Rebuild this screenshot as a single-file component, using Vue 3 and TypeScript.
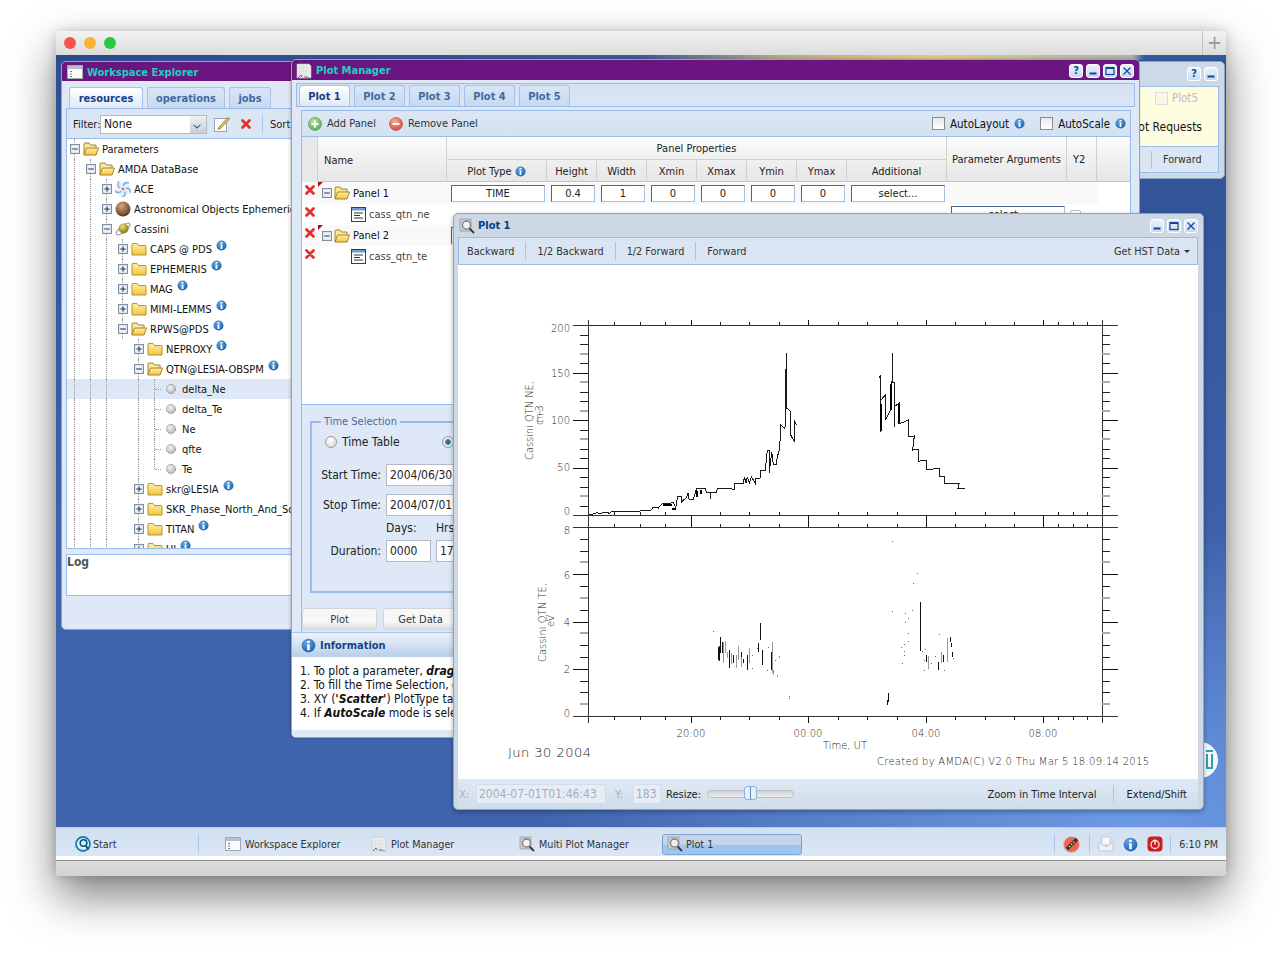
<template>
  <div class="page">
    <svg class="defs" width="0" height="0">
      <defs>
        <linearGradient id="gFolder" x1="0" y1="0" x2="0" y2="1"><stop offset="0" stop-color="#fff0a8" /><stop offset="1" stop-color="#f5c23c" /></linearGradient>
        <radialGradient id="gInfo" cx=".4" cy=".3" r=".8"><stop offset="0" stop-color="#6aa6e2" /><stop offset="1" stop-color="#0e5aa8" /></radialGradient>
        <radialGradient id="gAstro" cx=".4" cy=".3" r=".8"><stop offset="0" stop-color="#d9a77c" /><stop offset="1" stop-color="#4a2a18" /></radialGradient>
        <radialGradient id="gLeaf" cx=".4" cy=".35" r=".7"><stop offset="0" stop-color="#f4f4f4" /><stop offset="1" stop-color="#b4b4b4" /></radialGradient>
        <radialGradient id="gGreen" cx=".4" cy=".3" r=".8"><stop offset="0" stop-color="#b5e5a2" /><stop offset="1" stop-color="#4fa84a" /></radialGradient>
        <radialGradient id="gRed" cx=".4" cy=".3" r=".8"><stop offset="0" stop-color="#f9aa9c" /><stop offset="1" stop-color="#d8422f" /></radialGradient>
        <radialGradient id="gSaturn" cx=".4" cy=".3" r=".8"><stop offset="0" stop-color="#f1df62" /><stop offset="1" stop-color="#6f6420" /></radialGradient>
      </defs>
      <symbol id="folder" viewBox="0 0 16 16"><path d="M1 14V3.500q0-1 1-1h4l1.500 2H14q1 0 1 1V14z" fill="url(#gFolder)" stroke="#b3942f" /></symbol>
      <symbol id="folderOpen" viewBox="0 0 16 16"><path d="M1 14V3q0-1 1-1h4l1.500 2H13v3" fill="#f7e7a0" stroke="#a38626" /><path d="M1 14l2.500-7h12L13 14z" fill="url(#gFolder)" stroke="#a38626" /></symbol>
      <symbol id="plusBox" viewBox="0 0 9 9"><rect x=".5" y=".5" width="8" height="8" fill="#eef2f8" stroke="#7f8fa5" /><path d="M2 4.500h5M4.500 2v5" stroke="#24384f" /></symbol>
      <symbol id="minusBox" viewBox="0 0 9 9"><rect x=".5" y=".5" width="8" height="8" fill="#eef2f8" stroke="#7f8fa5" /><path d="M2 4.500h5" stroke="#24384f" /></symbol>
      <symbol id="info" viewBox="0 0 12 12"><circle cx="6" cy="6" r="5.500" fill="url(#gInfo)" /><rect x="5" y="2.200" width="2" height="1.800" fill="#fff" /><rect x="5" y="5" width="2" height="4.800" fill="#fff" /></symbol>
      <symbol id="redX" viewBox="0 0 12 12"><path d="M2.500 2.500l7 7M9.500 2.500l-7 7" stroke="#e2302b" stroke-width="2.800" stroke-linecap="round" /></symbol>
      <symbol id="leaf" viewBox="0 0 12 12"><circle cx="6" cy="6" r="4.500" fill="url(#gLeaf)" stroke="#9a9a9a" stroke-dasharray="2 .6" /></symbol>
      <symbol id="ace" viewBox="0 0 16 16"><circle cx="8" cy="8" r="7.500" fill="#e6f0fa" /><g fill="none" stroke="#7eb0e4" stroke-width="1.500"><path d="M8 5c1-3 3-4 6-3" /><path d="M8 5c1-3 3-4 6-3" transform="rotate(72 8 8)" /><path d="M8 5c1-3 3-4 6-3" transform="rotate(144 8 8)" /><path d="M8 5c1-3 3-4 6-3" transform="rotate(216 8 8)" /><path d="M8 5c1-3 3-4 6-3" transform="rotate(288 8 8)" /></g><circle cx="8" cy="8" r="1.300" fill="#e0663a" /></symbol>
      <symbol id="astro" viewBox="0 0 16 16"><circle cx="8" cy="8" r="7.500" fill="url(#gAstro)" /></symbol>
      <symbol id="cassini" viewBox="0 0 16 16"><ellipse cx="8" cy="8" rx="8.500" ry="3" transform="rotate(-40 8 8)" fill="none" stroke="#a5a59c" stroke-width="1.200" /><circle cx="8.500" cy="7.500" r="5" fill="url(#gSaturn)" /></symbol>
      <symbol id="param" viewBox="0 0 15 15"><rect x=".5" y=".5" width="14" height="14" fill="#fff" stroke="#23406b" /><rect x="1" y="1" width="13" height="2.500" fill="#6f9bd0" /><path d="M3 6h9M3 8.500h6M3 11h9" stroke="#333" /></symbol>
      <symbol id="pencil" viewBox="0 0 16 16"><rect x=".5" y="2.500" width="12" height="13" fill="#fdfdfd" stroke="#9aa4b0" /><path d="M5 11L14 1.500l1.500 1.500-9 9.500-2.500.8z" fill="#eec35c" stroke="#8c6a26" stroke-width=".8" /></symbol>
      <symbol id="appWin" viewBox="0 0 16 14"><rect x=".5" y=".5" width="15" height="13" fill="#fbfbfb" stroke="#a4a9b0" /><rect x="1" y="1" width="14" height="3" fill="#b5c0cc" /><path d="M3 6.500h2M3 9h2M3 11.500h2" stroke="#5a84b6" /></symbol>
      <symbol id="chartDoc" viewBox="0 0 16 16"><path d="M1 1h12l2 2v12H1z" fill="#efefef" stroke="#c4c4c4" stroke-width=".6" /><path d="M4 1v14M7 1v14M10 1v14M1 5h14M1 8h14M1 11h14" stroke="#d4d4d4" stroke-width=".6" /><path d="M2 15l3-3 1 2M9 13v2M11 13v2M13 14v1" stroke="#666" stroke-width="1" fill="none" /></symbol>
      <symbol id="magnify" viewBox="0 0 16 16"><rect x="1" y="1" width="11" height="12" fill="#c9cace" stroke="#8a8e96" stroke-width=".6" /><circle cx="7.500" cy="7" r="4" fill="#f7eeee" stroke="#7d7f86" stroke-width="1.300" /><path d="M10.500 10.500l4.500 4.500" stroke="#33373e" stroke-width="1.800" /></symbol>
      <symbol id="addBtn" viewBox="0 0 14 14"><circle cx="7" cy="7" r="6.500" fill="url(#gGreen)" stroke="#5b9a50" stroke-width=".7" /><path d="M3.500 7h7M7 3.500v7" stroke="#fff" stroke-width="2" /></symbol>
      <symbol id="removeBtn" viewBox="0 0 14 14"><circle cx="7" cy="7" r="6.500" fill="url(#gRed)" stroke="#c2513f" stroke-width=".7" /><path d="M3.500 7h7" stroke="#fff" stroke-width="2" /></symbol>
      <symbol id="wMin" viewBox="0 0 10 10"><path d="M1.500 7.500h7" stroke="#14459a" stroke-width="1.800" /></symbol>
      <symbol id="wMax" viewBox="0 0 10 10"><rect x="1" y="1.500" width="8" height="7" fill="none" stroke="#14459a" stroke-width="1.200" /><path d="M1 2.300h8" stroke="#14459a" stroke-width="1.400" /></symbol>
      <symbol id="wClose" viewBox="0 0 10 10"><path d="M1.500 1.500l7 7M8.500 1.500l-7 7" stroke="#14459a" stroke-width="1.200" /></symbol>
      <symbol id="startIcon" viewBox="0 0 16 16"><circle cx="8" cy="8" r="7" fill="#d8f0f8" stroke="#1a7fb5" stroke-width="1.800" /><circle cx="8.500" cy="7" r="3.300" fill="none" stroke="#104f7a" stroke-width="1.600" /><path d="M10.500 9.500l3 4" stroke="#104f7a" stroke-width="1.800" /></symbol>
      <symbol id="plug" viewBox="0 0 18 18"><circle cx="8.500" cy="9.500" r="8" fill="#ef6350" stroke="#c9cbcf" /><path d="M4 14L14 4" stroke="#35363a" stroke-width="3.500" /><path d="M6 12l6-6" stroke="#e8d37a" stroke-width="1.400" stroke-dasharray="1.500 1.500" /></symbol>
      <symbol id="mail" viewBox="0 0 16 16"><path d="M4 1h8v8H4z" fill="#fafafa" stroke="#b4bcc6" stroke-width=".7" /><path d="M1 6l7 5 7-5v9H1z" fill="#eef2f7" stroke="#b4bcc6" stroke-width=".7" /></symbol>
      <symbol id="power" viewBox="0 0 16 16"><rect x=".5" y=".5" width="15" height="15" rx="4" fill="#c8201c" /><circle cx="8" cy="8.500" r="4" fill="none" stroke="#fbe8e4" stroke-width="1.300" /><path d="M8 3.500v5" stroke="#fbe8e4" stroke-width="1.500" /></symbol>
      <symbol id="trash" viewBox="0 0 36 36"><circle cx="18" cy="18" r="18" fill="#f4f7fb" /><path d="M24 9h7M25 12v14h5V12" fill="none" stroke="#2f9fb3" stroke-width="2" /></symbol>
    </svg>

    <div class="mac-window">
      <div class="mac-title">
        <span class="light red"></span>
        <span class="light amber"></span>
        <span class="light green"></span>
        <span class="mac-plus">+</span>
      </div>

      <div class="desktop">
        <svg class="trash-shortcut"><use href="#trash" /></svg>

        <!-- Workspace Explorer -->
        <section class="win explorer">
          <header class="win-title purple">
            <svg class="ic16"><use href="#appWin" /></svg>
            <span class="win-name">Workspace Explorer</span>
          </header>
          <div class="explorer-body">
            <div class="tab-strip">
              <div v-for="(t, i) in explorerTabs" :key="t" class="tab" :class="{ active: i == 0 }">{{ t }}</div>
            </div>
            <div class="explorer-tools">
              <span class="filter-label">Filter:</span>
              <div class="combo"><span>None</span><i class="combo-arrow"></i></div>
              <svg class="ic16 tool-gap"><use href="#pencil" /></svg>
              <svg class="ic12 tool-gap2"><use href="#redX" /></svg>
              <i class="tool-sep"></i>
              <span class="sort-label">Sort</span>
            </div>
            <div class="tree">
              <div v-for="row in treeRows" :key="row.label" class="tree-row" :class="{ selected: row.selected }">
                <span v-for="c in row.level" :key="c" class="cell" :class="{ line: hasGuide(row.level, c - 1) }"></span>
                <span class="cell" :class="row.expand ? 'line' : 'elbow' + (row.label == 'Te' ? ' last' : '')">
                  <svg v-if="row.expand" class="box"><use :href="row.expand == 'plus' ? '#plusBox' : '#minusBox'" /></svg>
                </span>
                <svg :class="row.icon == 'leaf' ? 'ic12 leaf-ic' : 'ic16'"><use :href="'#' + row.icon" /></svg>
                <span class="tree-label">{{ row.label }}</span>
                <svg v-if="row.info" class="ic11 raised"><use href="#info" /></svg>
              </div>
            </div>
            <div class="log"><b>Log</b></div>
          </div>
        </section>

        <!-- Multi Plot Manager, mostly behind the others -->
        <section class="win multi">
          <header class="multi-title">
            <span class="win-btn">?</span>
            <span class="win-btn"><svg><use href="#wMin" /></svg></span>
          </header>
          <div class="multi-yellow">
            <div class="multi-plot"><i class="check disabled"></i><span>Plot5</span></div>
            <div class="multi-req">Plot Requests</div>
          </div>
          <div class="multi-tools"><i class="tool-sep"></i><span>Forward</span></div>
        </section>

        <!-- Plot Manager -->
        <section class="win manager">
          <header class="win-title purple manager-title">
            <svg class="ic16"><use href="#chartDoc" /></svg>
            <span class="win-name">Plot Manager</span>
            <div class="win-btns">
              <span class="win-btn">?</span>
              <span class="win-btn"><svg><use href="#wMin" /></svg></span>
              <span class="win-btn"><svg><use href="#wMax" /></svg></span>
              <span class="win-btn"><svg><use href="#wClose" /></svg></span>
            </div>
          </header>
          <div class="manager-body">
            <div class="tab-strip plot-tabs">
              <div v-for="(t, i) in plotTabs" :key="t" class="tab" :class="{ active: i == 0 }">{{ t }}</div>
            </div>
            <div class="manager-inner">
              <div class="panel-tools">
                <svg class="ic14"><use href="#addBtn" /></svg><span>Add Panel</span>
                <svg class="ic14 remove-ic"><use href="#removeBtn" /></svg><span>Remove Panel</span>
                <span class="spacer"></span>
                <i class="check"></i><span class="auto-label">AutoLayout</span><svg class="ic11"><use href="#info" /></svg>
                <i class="check auto2"></i><span class="auto-label">AutoScale</span><svg class="ic11"><use href="#info" /></svg>
              </div>
              <div class="grid-head">
                <div class="hcell h-del"></div>
                <div class="hcell h-name">Name</div>
                <div class="hcell h-props">Panel Properties</div>
                <div class="hcell h-sub" v-for="h in subHeads" :key="h">
                  {{ h }}<svg v-if="h == 'Plot Type'" class="ic11 head-info"><use href="#info" /></svg>
                </div>
                <div class="hcell h-args">Parameter Arguments</div>
                <div class="hcell h-y2">Y2</div>
                <div class="hcell h-end"></div>
              </div>
              <div class="grid-rows">
                <div v-for="p in panelRows" :key="p.name" class="grid-row" :class="{ shaded: p.panel }">
                  <div class="del-cell"><svg class="ic12"><use href="#redX" /></svg></div>
                  <div v-if="p.panel" class="name-cell panel-name">
                    <i class="dirty"></i>
                    <svg class="box"><use href="#minusBox" /></svg>
                    <svg class="ic16"><use href="#folderOpen" /></svg>
                    <span>{{ p.name }}</span>
                  </div>
                  <div v-else class="name-cell param-name">
                    <svg class="ic15"><use href="#param" /></svg>
                    <span>{{ p.name }}</span>
                  </div>
                  <template v-if="p.panel">
                    <div v-for="(v, i) in panelValues(p.name)" :key="i" class="val-cell"><input class="val" :value="v" readonly /></div>
                  </template>
                  <template v-else>
                    <div class="blank-props"></div>
                    <div class="val-cell"><input class="val" value="select..." readonly /></div>
                    <div class="val-cell y2"><i class="check small"></i></div>
                  </template>
                </div>
              </div>
              <div class="time-wrap">
                <fieldset class="time-set">
                  <legend>Time Selection</legend>
                  <div class="radio-line">
                    <i class="radio"></i><span class="radio-text">Time Table</span>
                    <i class="radio on"></i><span>Interval</span>
                  </div>
                  <div class="time-line"><label>Start Time:</label><input class="time-in" value="2004/06/30 17:00:00" readonly /></div>
                  <div class="time-line"><label>Stop Time:</label><input class="time-in" value="2004/07/01 11:00:00" readonly /></div>
                  <div class="time-line units"><label></label><span class="unit">Days:</span><span>Hrs:</span></div>
                  <div class="time-line dur"><label>Duration:</label><input class="dur-in" value="0000" readonly /><input class="dur-in" value="17" readonly /></div>
                </fieldset>
                <div class="form-btns">
                  <div class="form-btn">Plot</div>
                  <div class="form-btn">Get Data</div>
                </div>
              </div>
            </div>
            <div class="info-head"><svg class="ic15b"><use href="#info" /></svg><b>Information</b></div>
            <div class="info-text">
              <div>1. To plot a parameter, <b><i>drag</i></b> it to a panel</div>
              <div>2. To fill the Time Selection, drag a Time Table</div>
              <div>3. XY (<b><i>'Scatter'</i></b>) PlotType takes two parameters</div>
              <div>4. If <b><i>AutoScale</i></b> mode is selected</div>
            </div>
          </div>
        </section>

        <!-- Plot 1 -->
        <section class="win plot1">
          <header class="plot-title">
            <svg class="ic16"><use href="#magnify" /></svg>
            <span class="plot-name">Plot 1</span>
            <div class="win-btns">
              <span class="win-btn"><svg><use href="#wMin" /></svg></span>
              <span class="win-btn"><svg><use href="#wMax" /></svg></span>
              <span class="win-btn"><svg><use href="#wClose" /></svg></span>
            </div>
          </header>
          <div class="plot-tools">
            <template v-for="(b, i) in navButtons" :key="b">
              <span>{{ b }}</span><i v-if="i < 3" class="tool-sep"></i>
            </template>
            <span class="spacer"></span>
            <span>Get HST Data</span><i class="caret"></i>
          </div>
          <svg class="plot-svg" viewBox="458 265 740 514" shape-rendering="crispEdges">
            <path :d="axisPath" fill="none" stroke="#333" stroke-width="1" />
            <path :d="majorTicks" fill="none" stroke="#111" stroke-width="1" />
            <path :d="minorTicks" fill="none" stroke="#222" stroke-width="1" />
            <path :d="grayTicks" fill="none" stroke="#aaa" stroke-width="2" />
            <path :d="nePathLeft" fill="none" stroke="#1a1a1a" stroke-width="1" />
            <path :d="nePathRight" fill="none" stroke="#1a1a1a" stroke-width="1" />
            <path :d="neThick" fill="none" stroke="#000" stroke-width="2" />
            <path :d="teBlack" fill="none" stroke="#111" stroke-width="1" />
            <path :d="teGray" fill="none" stroke="#999" stroke-width="1" />
            <path :d="teDots" fill="none" stroke="#666" stroke-width="1" />
            <g class="plot-text" shape-rendering="auto">
              <text v-for="l in yLabels" :key="l.t + l.y" :x="570" :y="l.y" text-anchor="end">{{ l.t }}</text>
              <text v-for="l in xLabels" :key="l.t" :x="l.x" y="737" text-anchor="middle">{{ l.t }}</text>
              <text transform="translate(533,460) rotate(-90)" textLength="79">Cassini QTN NE,</text>
              <text class="small" transform="translate(543,425) rotate(-90)" textLength="20">cm−3</text>
              <text transform="translate(546,662) rotate(-90)" textLength="79">Cassini QTN TE,</text>
              <text class="small" transform="translate(554,627) rotate(-90)">eV</text>
              <text x="823" y="749" textLength="44">Time, UT</text>
              <text class="date" x="508" y="757" textLength="83">Jun  30  2004</text>
              <text x="877" y="765" textLength="272">Created by AMDA(C) V2.0 Thu Mar  5 18:09:14 2015</text>
            </g>
          </svg>
          <div class="plot-foot">
            <span class="off x-label">X:</span><input class="off-in x-in" value="2004-07-01T01:46:43" readonly />
            <span class="off y-label">Y:</span><input class="off-in y-in" value="183" readonly />
            <span class="resize-label">Resize:</span>
            <div class="slider"><i class="thumb"></i></div>
            <span class="spacer"></span>
            <span>Zoom in Time Interval</span><i class="tool-sep"></i><span class="extend">Extend/Shift</span>
          </div>
        </section>
      </div>

      <footer class="taskbar">
        <div class="task-item start-item"><svg class="ic16"><use href="#startIcon" /></svg><span>Start</span></div>
        <i class="tool-sep start-sep"></i>
        <div class="task-item item-ws"><svg class="ic16"><use href="#appWin" /></svg><span>Workspace Explorer</span></div>
        <div class="task-item item-pm"><svg class="ic16"><use href="#chartDoc" /></svg><span>Plot Manager</span></div>
        <div class="task-item item-mp"><svg class="ic16"><use href="#magnify" /></svg><span>Multi Plot Manager</span></div>
        <div class="task-active"><svg class="ic16"><use href="#magnify" /></svg><span>Plot 1</span></div>
        <span class="spacer"></span>
        <i class="tool-sep"></i>
        <svg class="ic18 tray1"><use href="#plug" /></svg>
        <i class="tool-sep tray-sep"></i>
        <svg class="ic16 tray2"><use href="#mail" /></svg>
        <svg class="ic15 tray3"><use href="#info" /></svg>
        <svg class="ic16 tray4"><use href="#power" /></svg>
        <i class="tool-sep tray-sep2"></i>
        <span class="clock">6:10 PM</span>
      </footer>
      <div class="white-strip"></div>
      <div class="mac-status"></div>
    </div>
  </div>
</template>

<script setup lang="ts">
interface TreeRow {
  label: string
  level: number
  icon: string
  expand?: 'plus' | 'minus'
  info?: boolean
  selected?: boolean
}

interface PanelRow {
  name: string
  panel: boolean
}

type Pt = [number, number]
// x, y1, y2
type Seg = [number, number, number]

const explorerTabs = ['resources', 'operations', 'jobs']
const plotTabs = ['Plot 1', 'Plot 2', 'Plot 3', 'Plot 4', 'Plot 5']
const subHeads = ['Plot Type', 'Height', 'Width', 'Xmin', 'Xmax', 'Ymin', 'Ymax', 'Additional']
const navButtons = ['Backward', '1/2 Backward', '1/2 Forward', 'Forward']

const treeRows: TreeRow[] = [
  { label: 'Parameters', level: 0, icon: 'folderOpen', expand: 'minus' },
  { label: 'AMDA DataBase', level: 1, icon: 'folderOpen', expand: 'minus' },
  { label: 'ACE', level: 2, icon: 'ace', expand: 'plus' },
  { label: 'Astronomical Objects Ephemerides', level: 2, icon: 'astro', expand: 'plus' },
  { label: 'Cassini', level: 2, icon: 'cassini', expand: 'minus' },
  { label: 'CAPS @ PDS', level: 3, icon: 'folder', expand: 'plus', info: true },
  { label: 'EPHEMERIS', level: 3, icon: 'folder', expand: 'plus', info: true },
  { label: 'MAG', level: 3, icon: 'folder', expand: 'plus', info: true },
  { label: 'MIMI-LEMMS', level: 3, icon: 'folder', expand: 'plus', info: true },
  { label: 'RPWS@PDS', level: 3, icon: 'folderOpen', expand: 'minus', info: true },
  { label: 'NEPROXY', level: 4, icon: 'folder', expand: 'plus', info: true },
  { label: 'QTN@LESIA-OBSPM', level: 4, icon: 'folderOpen', expand: 'minus', info: true },
  { label: 'delta_Ne', level: 5, icon: 'leaf', selected: true },
  { label: 'delta_Te', level: 5, icon: 'leaf' },
  { label: 'Ne', level: 5, icon: 'leaf' },
  { label: 'qfte', level: 5, icon: 'leaf' },
  { label: 'Te', level: 5, icon: 'leaf' },
  { label: 'skr@LESIA', level: 4, icon: 'folder', expand: 'plus', info: true },
  { label: 'SKR_Phase_North_And_South', level: 4, icon: 'folder', expand: 'plus' },
  { label: 'TITAN', level: 4, icon: 'folder', expand: 'plus', info: true },
  { label: 'UI', level: 4, icon: 'folder', expand: 'plus', info: true },
]

const panelRows: PanelRow[] = [
  { name: 'Panel 1', panel: true },
  { name: 'cass_qtn_ne', panel: false },
  { name: 'Panel 2', panel: true },
  { name: 'cass_qtn_te', panel: false },
]

function hasGuide(level: number, col: number) {
  if (col == 3) return false
  if (col == 4) return level == 5
  return true
}

function panelValues(name: string) {
  const height = name == 'Panel 1' ? '0.4' : '0.6'
  return ['TIME', height, '1', '0', '0', '0', '0', 'select...']
}

// plot drawing, coordinates are page pixels
const yLabels = [
  { t: '200', y: 332 }, { t: '150', y: 377 }, { t: '100', y: 424 }, { t: '50', y: 471 }, { t: '0', y: 515 },
  { t: '8', y: 534 }, { t: '6', y: 579 }, { t: '4', y: 626 }, { t: '2', y: 673 }, { t: '0', y: 717 },
]
const xLabels = [
  { t: '20:00', x: 691 }, { t: '00:00', x: 808 }, { t: '04:00', x: 926 }, { t: '08:00', x: 1043 },
]

const axisPath = [
  'M573 325H1118', 'M573 515.500H1118', 'M573 527H1118', 'M573 716H1118',
  'M588 320V723', 'M1102 320V723',
].join('')

const xMajor = [691, 808, 926, 1043]
const xMinor = [614, 640, 665, 720, 749, 779, 838, 867, 897, 955, 985, 1014, 1058, 1073, 1087]

let major = ''
let minor = ''
let gray = ''
for (const x of xMajor) {
  major += `M${x} 320V325M${x} 515V527M${x} 716V723`
}
for (const x of xMinor) {
  minor += `M${x} 322V325M${x} 512V515M${x} 524V527M${x} 716V720`
}

// y ticks of the two panels, every third one came out grey in the original gif
function yTicks(top: number, bottom: number, count: number, every: number) {
  const step = (bottom - top) / count
  for (let i = 1; i < count; i++) {
    const y = Math.round(top + i * step)
    if (i % every == 0) {
      major += `M573 ${y}H588M1102 ${y}H1118`
    } else if (i % 3 == 0) {
      gray += `M580 ${y}H588M1102 ${y}H1110`
    } else {
      minor += `M580 ${y}H588M1102 ${y}H1110`
    }
  }
}
yTicks(325, 515.5, 20, 5)
yTicks(527, 716, 16, 4)

const majorTicks = major
const minorTicks = minor
const grayTicks = gray

function polyline(pts: Pt[], ox: number, oy: number) {
  return pts.map((p, i) => `${i ? 'L' : 'M'}${(ox + p[0] / 3).toFixed(1)} ${(oy + p[1] / 3).toFixed(1)}`).join('')
}

function segments(list: Seg[], ox: number, oy: number) {
  return list.map((s) => `M${Math.round(ox + s[0] / 3)} ${Math.round(oy + s[1] / 3)}V${Math.round(oy + s[2] / 3)}`).join('')
}

const neLeft: Pt[] = [
  [237, 612], [250, 612], [260, 608], [272, 612], [280, 606], [300, 610], [305, 604], [320, 606], [330, 604],
  [380, 604], [400, 602], [420, 603], [430, 592], [445, 594], [455, 582], [490, 578], [497, 592], [503, 560],
  [515, 560], [515, 575], [530, 562], [535, 548], [537, 568], [550, 568], [560, 535], [585, 535], [590, 548],
  [600, 548], [600, 568], [602, 548], [620, 548], [622, 535], [660, 535], [672, 540], [674, 520], [700, 520],
  [703, 500], [708, 520], [712, 500], [718, 520], [724, 500], [736, 520], [738, 505], [750, 505], [752, 482],
  [766, 482], [772, 420], [778, 420], [778, 488], [785, 425], [790, 462], [800, 462], [802, 432], [806, 432],
  [810, 395], [812, 345], [825, 355], [826, 295], [829, 130], [831, 295], [843, 305], [842, 375], [853, 395],
  [853, 333], [860, 345],
]
const neRight: Pt[] = [
  [237, 205], [241, 198], [241, 365], [243, 270], [256, 255], [256, 330], [272, 300], [272, 225], [276, 218],
  [277, 130], [277, 218], [284, 218], [284, 352], [285, 288], [297, 280], [297, 342], [325, 330], [327, 380],
  [343, 378], [338, 420], [354, 418], [354, 454], [380, 450], [380, 478], [418, 476], [420, 500], [432, 500],
  [432, 520], [478, 520], [474, 535], [494, 535],
]
const nePathLeft = polyline(neLeft, 510, 310)
const nePathRight = polyline(neRight, 800, 310)
const neThick = 'M881 404V431M891 385V410M899 404V424M663 505H672M697 491V497M701 490V494M672 509H676'

const teLeftBlack: Seg[] = [
  [653, 380, 420], [657, 378, 422], [661, 352, 400], [665, 365, 398], [688, 390, 445], [700, 405, 430],
  [722, 395, 425], [730, 418, 430], [740, 405, 450], [775, 370, 395], [780, 310, 360], [785, 390, 435], [812, 395, 450],
]
const teLeftGray: Seg[] = [
  [669, 365, 430], [675, 363, 400], [681, 395, 415], [693, 400, 432], [707, 405, 443], [714, 378, 420],
  [722, 410, 442], [748, 385, 430], [815, 365, 460], [820, 450, 465], [830, 465, 470], [836, 408, 415],
]
const teRightBlack: Seg[] = [
  [361, 246, 392], [378, 405, 425], [415, 425, 450], [430, 405, 425], [450, 350, 365], [452, 368, 382],
  [457, 395, 410], [264, 520, 545], [260, 540, 555],
]
const teRightGray: Seg[] = [[383, 408, 448], [423, 395, 428], [440, 355, 425]]
const dotsLeft: Pt[] = [
  [640, 333], [757, 405], [770, 385], [805, 380], [825, 420], [755, 445], [800, 450], [868, 527], [868, 533],
]
const dotsRight: Pt[] = [
  [277, 64], [350, 160], [340, 190], [277, 273], [337, 270], [316, 280], [325, 295], [316, 307], [323, 340],
  [325, 362], [312, 372], [302, 381], [312, 392], [312, 405], [307, 430], [416, 341], [375, 387], [367, 394],
  [372, 420], [373, 451], [393, 430], [405, 407], [433, 450], [460, 413],
]
const teBlack = segments(teLeftBlack, 500, 520) + segments(teRightBlack, 800, 520)
const teGray = segments(teLeftGray, 500, 520) + segments(teRightGray, 800, 520)

function dots(list: Pt[], ox: number, oy: number) {
  return list.map((p) => `M${Math.round(ox + p[0] / 3)} ${Math.round(oy + p[1] / 3)}h1`).join('')
}
const teDots = dots(dotsLeft, 500, 520) + dots(dotsRight, 800, 520)
</script>

<style scoped>
.page {
  width: 1282px;
  height: 956px;
  padding: 31px 56px 0;
  box-sizing: border-box;
  overflow: hidden;
  background: #fff;
  font-family: "DejaVu Sans Condensed", "DejaVu Sans", sans-serif;
  font-size: 11px;
  color: #222;
}

.defs {
  position: absolute;
}

.mac-window {
  width: 1170px;
  height: 845px;
  display: flex;
  flex-direction: column;
  border-radius: 5px 5px 4px 4px;
  overflow: hidden;
  box-shadow: 0 20px 45px rgba(0, 0, 0, 0.5), 0 0 12px rgba(0, 0, 0, 0.18);
}

.mac-title {
  height: 24px;
  flex: none;
  display: flex;
  align-items: center;
  gap: 8px;
  padding-left: 8px;
  background: linear-gradient(#f3f3f3, #dcdcdc);
}

.light {
  width: 12px;
  height: 12px;
  border-radius: 50%;
}
.light.red { background: #f8524f; }
.light.amber { background: #fbb33a; }
.light.green { background: #2ec840; }

.mac-plus {
  margin-left: auto;
  width: 23px;
  height: 24px;
  border-left: 1px solid #c4c4c4;
  text-align: center;
  font-size: 20px;
  line-height: 22px;
  color: #999;
}

.desktop {
  flex: none;
  height: 772px;
  position: relative;
  overflow: hidden;
  background:
    linear-gradient(to right, #2a4a8e 0, #3a5a98 50%, #b6a887 62%, #e0ca8a 75%, #a9b2ac 92%, #34589c 93%) top / 100% 5px no-repeat,
    radial-gradient(ellipse 600px 300px at 92% 100%, #6c9ae4 0, rgba(108, 154, 228, 0.55) 50%, rgba(108, 154, 228, 0) 100%),
    linear-gradient(#2f4f93, #4063ad 70%);
}

.trash-shortcut {
  position: absolute;
  left: 1126px;
  top: 687px;
  width: 36px;
  height: 36px;
}

.taskbar {
  flex: none;
  height: 29px;
  display: flex;
  align-items: center;
  padding: 4px 0 0 19px;
  box-sizing: border-box;
  background: linear-gradient(#d2e0f1, #dae6f4);
  border-top: 1px solid #b9cfe8;
  color: #333;
  font-size: 10.7px;
}

.white-strip {
  height: 4px;
  flex: none;
  background: #fff;
  border-bottom: 1px solid #8d8d8d;
  box-sizing: content-box;
}

.mac-status {
  flex: 1;
  background: linear-gradient(#dcdcdc, #d2d2d2);
}

.ic11 { width: 11px; height: 11px; flex: none; }
.ic12 { width: 12px; height: 12px; flex: none; }
.ic14 { width: 14px; height: 14px; flex: none; }
.ic15 { width: 15px; height: 15px; flex: none; }
.ic15b { width: 15px; height: 15px; flex: none; }
.ic16 { width: 16px; height: 16px; flex: none; }
.ic18 { width: 18px; height: 18px; flex: none; }
.box { width: 10px; height: 10px; flex: none; }

.spacer { flex: 1; }

.tool-sep {
  width: 1px;
  height: 18px;
  flex: none;
  background: #a9c6ea;
}

.win {
  position: absolute;
  box-sizing: border-box;
  border-radius: 5px;
  border: 1px solid #8da3bf;
  overflow: hidden;
  background: #dfe8f6;
  display: flex;
  flex-direction: column;
}

.win-title {
  flex: none;
  height: 20px;
  display: flex;
  align-items: center;
  padding: 1px 0 0 4px;
  box-sizing: border-box;
  gap: 4px;
}

.purple {
  background: #6b1680;
  color: #1fd0c2;
  font-weight: bold;
  font-size: 11px;
}

.win-btns {
  margin-left: auto;
  display: flex;
  gap: 3px;
  padding-right: 5px;
}

.win-btn {
  width: 14px;
  height: 14px;
  box-sizing: border-box;
  border: 1px solid #fff;
  border-radius: 3px;
  background: linear-gradient(#eaf2fc, #c8daf2);
  color: #14459a;
  font-weight: bold;
  font-size: 11px;
  line-height: 12px;
  text-align: center;
  display: flex;
  align-items: center;
  justify-content: center;
}

.win-btn svg {
  width: 10px;
  height: 10px;
}

.tab-strip {
  flex: none;
  display: flex;
  align-items: flex-end;
  gap: 4px;
  padding-left: 3px;
  border: 1px solid #99bce8;
  border-bottom: none;
  background: #dae6f5;
}

.tab {
  box-sizing: border-box;
  padding: 0 10px;
  height: 21px;
  line-height: 21px;
  border: 1px solid #a5c3ea;
  border-bottom: none;
  border-radius: 3px 3px 0 0;
  background: linear-gradient(#d9e6f6, #c6d9f0);
  color: #416aa3;
  font-weight: bold;
}

.tab.active {
  color: #15428b;
  background: linear-gradient(#fff, #dfe9f6);
}

/* explorer */
.explorer {
  left: 5px;
  top: 6px;
  width: 260px;
  height: 569px;
}

.explorer .purple {
  padding-left: 5px;
  height: 19px;
}

.explorer-body {
  flex: 1;
  padding: 6px 0 0 4px;
}

.explorer .tab-strip {
  height: 21px;
  border: none;
  background: none;
  border-bottom: 1px solid #99bce8;
}

.explorer .tab {
  padding: 0;
  width: 74px;
  text-align: center;
}
.explorer .tab:nth-child(2) { width: 78px; }
.explorer .tab:nth-child(3) { width: 42px; }

.explorer-tools {
  height: 30px;
  display: flex;
  align-items: center;
  padding: 1px 0 0 6px;
  border-left: 1px solid #99bce8;
  border-bottom: 1px solid #99bce8;
  background: #dbe6f5;
  white-space: nowrap;
  box-sizing: border-box;
}

.filter-label { width: 27px; flex: none; }

.combo {
  width: 107px;
  height: 19px;
  flex: none;
  box-sizing: border-box;
  border: 1px solid #b5b8c8;
  background: #fff;
  padding-left: 3px;
  line-height: 17px;
  font-size: 12px;
  display: flex;
  justify-content: space-between;
}

.combo-arrow {
  width: 16px;
  background: linear-gradient(#eef1f6, #c9ced6);
  position: relative;
}

.combo-arrow::after {
  content: "";
  position: absolute;
  left: 4px;
  top: 6px;
  width: 5px;
  height: 5px;
  border-right: 1.500px solid #24476f;
  border-bottom: 1.500px solid #24476f;
  transform: scale(0.9, 0.8) rotate(45deg);
}

.tool-gap { margin-left: 7px; }
.tool-gap2 { margin: 0 10px 0 10px; }
.sort-label { margin-left: 7px; }

.tree {
  height: 410px;
  overflow: hidden;
  background: #fff;
  border-left: 1px solid #99bce8;
  border-bottom: 1px solid #99bce8;
  box-sizing: border-box;
}

.tree-row {
  height: 20px;
  display: flex;
  align-items: center;
  white-space: nowrap;
  color: #111;
}

.tree-row.selected {
  background: #dfe8f6;
}

.cell {
  width: 16px;
  height: 20px;
  flex: none;
  position: relative;
  display: flex;
  align-items: center;
  justify-content: center;
}

.cell.line::before,
.cell.elbow::before {
  content: "";
  position: absolute;
  left: 7px;
  top: 0;
  bottom: 0;
  border-left: 1px dotted #999;
}

.cell.elbow.last::before {
  bottom: 10px;
}

.cell.elbow::after {
  content: "";
  position: absolute;
  left: 8px;
  top: 10px;
  width: 6px;
  border-top: 1px dotted #999;
}

.cell .box {
  position: relative;
}

.tree-label {
  margin-left: 3px;
}

.leaf-ic {
  margin: 0 2px;
}

.raised {
  margin-left: 4px;
  margin-bottom: 8px;
}

.log {
  margin-top: 5px;
  height: 42px;
  box-sizing: border-box;
  background: #fff;
  border: 1px solid #99bce8;
  border-right: none;
  color: #555;
  font-size: 12px;
}

/* multi plot */
.multi {
  left: 1060px;
  top: 6px;
  width: 109px;
  height: 118px;
  background: #cdd9e6;
  border-radius: 5px;
}

.multi-title {
  height: 24px;
  flex: none;
  display: flex;
  justify-content: flex-end;
  align-items: center;
  gap: 3px;
  padding-right: 6px;
}

.multi-yellow {
  height: 61px;
  flex: none;
  margin-right: 5px;
  border: 1px solid #99bce8;
  box-sizing: border-box;
  background: #fffde0;
  padding-left: 8px;
  white-space: nowrap;
}

.multi-plot {
  display: flex;
  align-items: center;
  justify-content: flex-end;
  gap: 4px;
  padding: 4px 20px 0 0;
  color: #bbb;
  font-size: 11.5px;
}

.multi-req {
  margin-top: 15px;
  text-align: right;
  padding-right: 16px;
  color: #111;
  font-size: 12px;
}

.multi-tools {
  height: 26px;
  margin-right: 5px;
  flex: none;
  display: flex;
  align-items: center;
  gap: 11px;
  padding-left: 33px;
  background: #dbe6f5;
  border: 1px solid #99bce8;
  border-top: none;
  box-sizing: border-box;
  color: #333;
  font-size: 10.7px;
}

/* manager */
.manager {
  left: 235px;
  top: 4px;
  width: 849px;
  height: 679px;
  z-index: 2;
  box-shadow: -1px 0 3px rgba(0, 0, 0, 0.2);
}

.manager-body {
  flex: 1;
  padding: 3px 4px 0;
  display: flex;
  flex-direction: column;
}

.plot-tabs {
  height: 24px;
  padding-left: 2px;
  background: linear-gradient(#d4e1f2, #dae6f5);
  border-bottom: 1px solid #99bce8;
  box-sizing: border-box;
}

.plot-tabs .tab {
  width: 51px;
  padding: 0;
  text-align: center;
  height: 21px;
}

.manager-inner {
  margin: 3px 0 0 5px;
  margin-right: 4px;
  flex: none;
  height: 522px;
  background: #dfe8f6;
  border: 1px solid #99bce8;
  border-top: none;
  border-bottom: none;
  box-sizing: border-box;
  display: flex;
  flex-direction: column;
}

.panel-tools {
  height: 27px;
  flex: none;
  box-sizing: border-box;
  display: flex;
  align-items: center;
  gap: 5px;
  padding: 0 4px 0 6px;
  background: linear-gradient(#dce7f5, #d3e1f1);
  border-top: 1px solid #99bce8;
  border-bottom: 1px solid #99bce8;
  color: #333;
}

.remove-ic {
  margin-left: 8px;
}

.auto-label {
  color: #111;
  font-size: 11.5px;
}

.auto2 {
  margin-left: 10px;
}

.check {
  width: 13px;
  height: 13px;
  box-sizing: border-box;
  border: 1px solid #8c8c8c;
  background: linear-gradient(#e8e8e8, #fff);
  display: block;
  flex: none;
}

.check.disabled {
  border-color: #ddd;
  background: #f8f8e6;
}

.check.small {
  width: 11px;
  height: 11px;
  border-radius: 2px;
  border-color: #bbb;
  background: #fff;
  margin: 1px 0 0 3px;
}

.grid-head {
  flex: none;
  display: grid;
  grid-template-columns: 16px 129px 100px repeat(6, 50px) 100px 120px 30px 31px;
  grid-template-rows: 23px 22px;
  background: linear-gradient(#fbfbfb, #e6e6e6);
  border-bottom: 1px solid #c5c5c5;
  box-sizing: border-box;
  height: 45px;
  color: #222;
}

.hcell {
  display: flex;
  align-items: center;
  justify-content: center;
  border-right: 1px solid #d0d0d0;
  white-space: nowrap;
}

.h-del { grid-row: 1 / 3; grid-column: 1; background: #e8e8e8; }
.h-name { grid-row: 1 / 3; grid-column: 2; justify-content: flex-start; padding: 1px 0 0 6px; }
.h-props { grid-row: 1; grid-column: 3 / 11; border-bottom: 1px solid #d0d0d0; }
.h-args { grid-row: 1 / 3; grid-column: 11; }
.h-y2 { grid-row: 1 / 3; grid-column: 12; justify-content: flex-start; padding-left: 6px; }
.h-end { grid-row: 1 / 3; grid-column: 13; border-right: none; }
.h-sub { grid-row: 2; }
.head-info { margin-left: 3px; }

.grid-rows {
  flex: none;
  height: 223px;
  background: #fff;
  border-bottom: 1px solid #99bce8;
  box-sizing: border-box;
}

.grid-row {
  height: 21px;
  width: 796px;
  display: grid;
  grid-template-columns: 16px 129px 100px repeat(6, 50px) 100px 120px 30px;
  align-items: center;
}

.grid-row:first-child { height: 22px; }

.grid-row.shaded {
  background: #f9f9f9;
}

.del-cell {
  height: 100%;
  padding-top: 2px;
  box-sizing: border-box;
  display: flex;
  justify-content: center;
}

.name-cell {
  display: flex;
  align-items: center;
  height: 100%;
  position: relative;
  white-space: nowrap;
}

.panel-name { padding-left: 4px; gap: 2px; color: #111; }
.panel-name span { margin-left: 1px; }
.param-name { padding-left: 33px; gap: 3px; color: #444; }

.dirty {
  position: absolute;
  left: 0;
  top: 0;
  border-top: 5px solid #a8101c;
  border-right: 5px solid transparent;
}

.val-cell {
  padding: 0 2px 0 4px;
}

.val-cell.y2 { padding: 0; }

.val {
  width: 100%;
  height: 17px;
  box-sizing: border-box;
  border: 1px solid;
  border-color: #4f648a #a3c0e6 #a3c0e6 #4f648a;
  background: #fff;
  font: inherit;
  text-align: center;
  color: #222;
  padding: 0;
  display: block;
}

.blank-props {
  grid-column: 3 / 11;
}

.time-wrap {
  flex: 1;
  padding: 0 0 0 8px;
}

.time-set {
  margin: 10px 0 0 0;
  padding: 0;
  height: 178px;
  box-sizing: border-box;
  border: 2px solid #99bce8;
  border-right: none;
  min-width: 0;
  font-size: 12px;
}

.time-set legend {
  margin-left: 9px;
  padding: 0 3px;
  color: #4a6aa0;
  font-size: 11px;
}

.radio-line {
  display: flex;
  align-items: center;
  gap: 5px;
  height: 14px;
  margin: 7px 0 15px 13px;
  color: #222;
}

.radio-text {
  width: 95px;
  flex: none;
}

.radio {
  width: 12px;
  height: 12px;
  box-sizing: border-box;
  border-radius: 50%;
  border: 1px solid #9a9a9a;
  background: radial-gradient(circle at 40% 30%, #fff, #d2d2d2);
  flex: none;
}

.radio.on {
  margin-left: 0;
  background: radial-gradient(circle, #0d5b96 0, #2a8cc6 35%, #e6e6e6 45%);
}

.time-line {
  display: flex;
  align-items: center;
  height: 22px;
  margin-bottom: 8px;
  gap: 5px;
}

.time-line label {
  width: 69px;
  flex: none;
  text-align: right;
  white-space: nowrap;
}

.time-line.units {
  height: 14px;
  margin-bottom: 5px;
  margin-top: -3px;
}

.time-line .unit {
  width: 45px;
}

.time-in,
.dur-in {
  height: 22px;
  box-sizing: border-box;
  border: 1px solid #b5b8c8;
  background: #fff;
  font: inherit;
  color: #222;
  padding: 0 3px;
  width: 140px;
}

.dur-in {
  width: 45px;
}

.form-btns {
  display: flex;
  gap: 6px;
  margin: 15px 0 0 -8px;
}

.form-btn {
  width: 75px;
  height: 22px;
  box-sizing: border-box;
  border: 1px solid #d4d4d4;
  border-radius: 3px;
  background: linear-gradient(#f7f7f7 65%, #dcdcdc);
  text-align: center;
  line-height: 21px;
  color: #333;
}

.info-head {
  height: 25px;
  flex: none;
  margin: 0 -4px;
  display: flex;
  align-items: center;
  gap: 4px;
  padding-left: 9px;
  color: #15428b;
  background: linear-gradient(#eef3fa, #b9cfe9);
  border-top: 1px solid #a9c6ea;
  box-sizing: border-box;
}

.info-text {
  flex: 1;
  margin: 0 -4px;
  background: #fff;
  padding: 7px 0 0 8px;
  line-height: 14px;
  font-size: 12px;
  color: #111;
  white-space: nowrap;
  border-bottom: 7px solid #dfe8f6;
}

/* plot 1 */
.plot1 {
  left: 397px;
  top: 158px;
  width: 751px;
  height: 597px;
  z-index: 3;
  background: #cdd8e5;
  padding: 0 5px 0 4px;
  box-shadow: 0 2px 5px rgba(0, 0, 0, 0.3);
}

.plot-title {
  height: 23px;
  flex: none;
  display: flex;
  align-items: center;
  gap: 3px;
  padding-left: 1px;
}

.plot-title .win-btns {
  padding-right: 0;
}

.plot-name {
  font-weight: bold;
  color: #04408c;
}

.plot-tools {
  height: 28px;
  flex: none;
  box-sizing: border-box;
  display: flex;
  align-items: center;
  gap: 11px;
  padding: 0 7px 0 8px;
  color: #333;
  background: #dae5f3;
  border: 1px solid #99bce8;
  font-size: 10.8px;
}

.caret {
  margin-left: -7px;
  border-top: 3px solid #333;
  border-left: 3px solid transparent;
  border-right: 3px solid transparent;
}

.plot-svg {
  display: block;
  width: 740px;
  height: 514px;
  flex: none;
  background: #fff;
}

.plot-text {
  font-family: "DejaVu Sans", sans-serif;
  font-weight: 200;
  font-size: 10px;
  fill: #1c1c1c;
  stroke: none;
  white-space: pre;
}

.plot-text .small {
  font-size: 10px;
}

.plot-text .date {
  font-size: 13px;
}

.plot-foot {
  flex: 1;
  display: flex;
  align-items: center;
  padding: 0 10px 0 1px;
  background: linear-gradient(#e0e9f6, #cfdde9);
  color: #222;
  white-space: nowrap;
}

.off {
  color: #aab;
}

.x-label { width: 17px; flex: none; }
.y-label { width: 18px; flex: none; margin-left: 9px; }
.resize-label { width: 41px; flex: none; margin-left: 5px; }

.off-in {
  height: 20px;
  box-sizing: border-box;
  border: 1px solid #d4dde9;
  background: #e6edf7;
  color: #a6adb8;
  font: inherit;
  font-size: 12px;
  padding: 0 2px;
}

.x-in { width: 130px; }
.y-in { width: 28px; padding: 0 2px; }

.slider {
  width: 85px;
  height: 6px;
  border: 1px solid #b9bfc8;
  border-radius: 4px;
  background: linear-gradient(#cfcfcf, #eee);
  position: relative;
  box-sizing: content-box;
  flex: none;
}

.thumb {
  position: absolute;
  left: 36px;
  top: -5px;
  width: 13px;
  height: 14px;
  box-sizing: border-box;
  border: 1px solid #8eb1dd;
  border-radius: 3px;
  background: linear-gradient(to right, #e6f0fc 45%, #5d87bd 45%, #5d87bd 55%, #e6f0fc 55%);
}

.plot-foot .tool-sep {
  margin: 0 13px 0 16px;
}

.extend {
  margin-right: 1px;
}

/* taskbar positions */
.task-item {
  display: flex;
  align-items: center;
  gap: 4px;
  flex: none;
  white-space: nowrap;
}

.start-item { width: 123px; gap: 2px; }
.start-sep { margin-right: 26px; }
.item-ws { width: 146px; }
.item-pm { width: 148px; }
.item-mp { width: 143px; }

.task-active {
  width: 140px;
  height: 21px;
  flex: none;
  box-sizing: border-box;
  border: 1px solid #7fa4d2;
  border-radius: 3px;
  background: linear-gradient(#c4d5ea 50%, #9cc6f0 50%);
  display: flex;
  align-items: center;
  gap: 3px;
  padding-left: 4px;
}

.tray1 { margin: 0 8px; }
.tray2 { margin: 0 9px 0 8px; }
.tray3 { margin-right: 9px; }
.tray4 { margin-right: 7px; }
.clock { margin: 0 8px; color: #333; white-space: nowrap; }
</style>
